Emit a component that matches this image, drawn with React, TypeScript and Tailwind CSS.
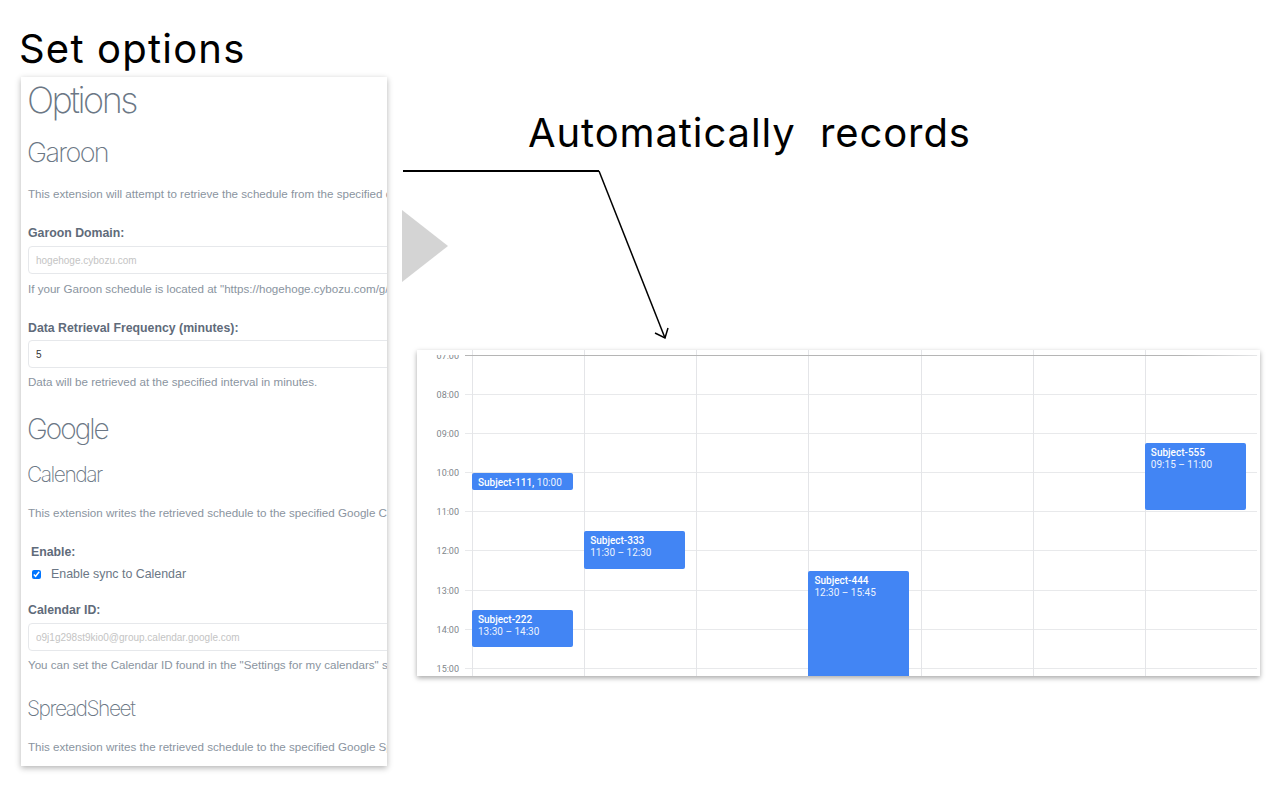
const hours = ['07:00', '08:00', '09:00', '10:00', '11:00', '12:00', '13:00', '14:00', '15:00'];

type CalendarEvent = { col: number; title: string; time: string; inline?: boolean; start: number; end: number };

const events: CalendarEvent[] = [
  { col: 0, title: 'Subject-111', time: '10:00', inline: true, start: 10, end: 10.5 },
  { col: 0, title: 'Subject-222', time: '13:30 – 14:30', start: 13.5, end: 14.5 },
  { col: 1, title: 'Subject-333', time: '11:30 – 12:30', start: 11.5, end: 12.5 },
  { col: 3, title: 'Subject-444', time: '12:30 – 15:45', start: 12.5, end: 15.75 },
  { col: 6, title: 'Subject-555', time: '09:15 – 11:00', start: 9.25, end: 11 },
];

const HOUR = 39.1;

function Help({ className, children }: { className: string; children: React.ReactNode }) {
  return <p className={`h-5 leading-5 text-[11.6px] text-[#8a94a0] whitespace-nowrap ${className}`}>{children}</p>;
}

function Label({ className, children }: { className: string; children: React.ReactNode }) {
  return <div className={`h-5 pt-px leading-5 text-[12.3px] font-bold text-[#5f6b7a] whitespace-nowrap ${className}`}>{children}</div>;
}

function Field({ className, placeholder, value }: { className: string; placeholder?: string; value?: string }) {
  return (
    <input
      readOnly
      className={`block h-7 w-[420px] px-[7px] text-[10px] text-[#333] placeholder:text-[#c4c4c4] border border-[#e6e8eb] rounded ${className}`}
      placeholder={placeholder}
      value={value}
    />
  );
}

function OptionsPanel() {
  return (
    <div className="w-[366px] ml-px pt-px pb-[9px] pl-[7px] overflow-hidden bg-white shadow-[0_2px_6px_rgba(0,0,0,0.3)] text-[#6b7785] font-['Liberation_Sans',sans-serif]">
      <h1 className="-ml-px h-11 leading-[44px] text-[36px] font-['Inter',sans-serif] font-extralight tracking-[-0.07em]">Options</h1>
      <h2 className="-ml-px mt-[15px] h-8 leading-8 text-[27px] font-['Inter',sans-serif] font-extralight tracking-[-0.06em]">Garoon</h2>
      <Help className="mt-[15px]">This extension will attempt to retrieve the schedule from the specified domain</Help>
      <Label className="mt-[18px]">Garoon Domain:</Label>
      <Field className="mt-1" placeholder="hogehoge.cybozu.com" />
      <Help className="mt-[5px]">If your Garoon schedule is located at "https://hogehoge.cybozu.com/g/schedule</Help>
      <Label className="mt-[18px]">Data Retrieval Frequency (minutes):</Label>
      <Field className="mt-[3px]" value="5" />
      <Help className="mt-1">Data will be retrieved at the specified interval in minutes.</Help>
      <h1 className="-ml-px mt-[17px] h-10 leading-10 text-[28px] font-['Inter',sans-serif] font-extralight tracking-[-0.07em]">Google</h1>
      <h2 className="-ml-px mt-[10px] h-8 leading-8 text-[21px] font-['Inter',sans-serif] font-extralight tracking-[-0.07em]">Calendar</h2>
      <Help className="mt-3">This extension writes the retrieved schedule to the specified Google Calendar</Help>
      <Label className="mt-[18px] ml-[3px]">Enable:</Label>
      <label className="mt-[3px] h-5 flex items-center ml-1 text-[12.4px] text-[#6b7785]">
        <input type="checkbox" checked readOnly className="w-[9px] h-[9px] accent-[#0075ff] mr-[10px]" />
        <span className="pt-px">Enable sync to Calendar</span>
      </label>
      <Label className="mt-[15px]">Calendar ID:</Label>
      <Field className="mt-1" placeholder="o9j1g298st9kio0@group.calendar.google.com" />
      <Help className="mt-1">You can set the Calendar ID found in the "Settings for my calendars" section</Help>
      <h2 className="-ml-px mt-[18px] h-8 leading-8 text-[21px] font-['Inter',sans-serif] font-extralight tracking-[-0.07em]">SpreadSheet</h2>
      <Help className="mt-3">This extension writes the retrieved schedule to the specified Google SpreadSheet</Help>
    </div>
  );
}

function CalendarPanel() {
  return (
    <div className="relative ml-[15px] w-[843px] h-[326px] overflow-hidden bg-white shadow-[0_2px_5px_rgba(0,0,0,0.35)] font-['Roboto',sans-serif]">
      <div className="pt-[5px]">
        {hours.map((h) => (
          <div key={h} className="flex h-[39.1px]">
            <span className="w-[42px] -mt-[5px] h-3 leading-3 text-right text-[9px] text-[#80868b]">{h}</span>
            <div className="ml-[6px] mr-[3px] flex-1 border-t border-[#e8e9eb]" />
          </div>
        ))}
      </div>
      <div className="absolute inset-y-0 left-[55px] right-[3px] grid grid-cols-7">
        {[0, 1, 2, 3, 4, 5, 6].map((col) => (
          <div key={col} className="relative border-l border-[#e4e5e8]">
            {events
              .filter((e) => e.col === col)
              .map((e) => (
                <div
                  key={e.title}
                  className="absolute -left-px w-[101px] pl-[6px] pt-1 rounded-[2px] bg-[#4285f4] text-white text-[10px] leading-3 whitespace-nowrap"
                  style={{ top: 5.5 + (e.start - 7) * HOUR, height: (e.end - e.start) * HOUR - 2 }}
                >
                  {e.inline ? (
                    <div>
                      <span className="font-medium">{e.title},</span> <span className="opacity-90">{e.time}</span>
                    </div>
                  ) : (
                    <>
                      <div className="font-medium">{e.title}</div>
                      <div className="opacity-90">{e.time}</div>
                    </>
                  )}
                </div>
              ))}
          </div>
        ))}
      </div>
      <div className="absolute top-[5px] left-[48px] right-0 h-px bg-gradient-to-r from-[#b5b5b5] via-[#b5b5b5] via-90% to-transparent" />
      <div className="absolute top-0 left-0 w-[48px] h-[5px] bg-white" />
    </div>
  );
}

export default function App() {
  return (
    <div className="relative flex w-[1280px] h-[800px] bg-white text-black font-['Inter',sans-serif]">
      <div className="pl-5 pt-[25px] w-[402px]">
        <div className="-ml-px h-[52px] leading-[48px] text-[40px] tracking-[1.2px]">Set options</div>
        <OptionsPanel />
      </div>
      <div className="flex flex-col pt-[109px]">
        <div className="ml-[126px] h-12 leading-[48px] text-[40px] tracking-[0.9px] whitespace-pre">Automatically  records</div>
        <svg className="mt-[53px] w-[46px] h-[72px]" viewBox="0 0 46 72">
          <polygon points="0,0 46,36 0,72" fill="#d4d4d4" />
        </svg>
        <div className="mt-[68px]">
          <CalendarPanel />
        </div>
      </div>
      {/* connector from the options to the calendar */}
      <svg className="absolute inset-0 pointer-events-none" width="1280" height="800" fill="none" stroke="black">
        <path d="M403 171H599" strokeWidth="2" />
        <path d="M599 171L665 338" strokeWidth="1.5" />
        <path d="M655 333L665 338L668 328" strokeWidth="1.5" />
      </svg>
    </div>
  );
}
